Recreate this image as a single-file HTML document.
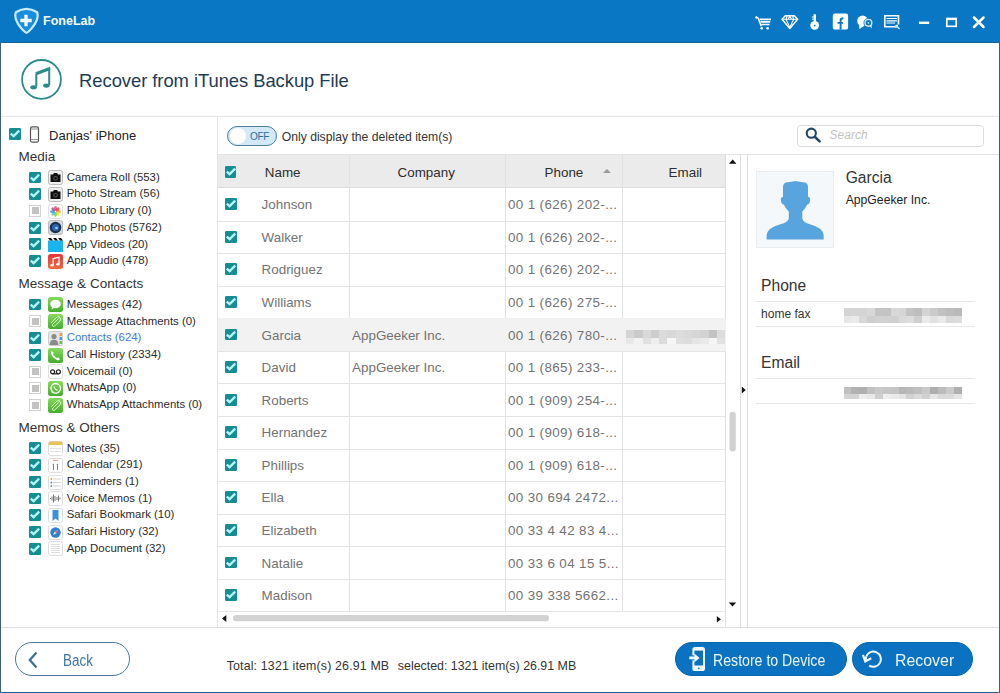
<!DOCTYPE html>
<html><head><meta charset="utf-8">
<style>
*{margin:0;padding:0;box-sizing:border-box}
html,body{width:1000px;height:693px;overflow:hidden;background:#fff}
body{font-family:"Liberation Sans",sans-serif;position:relative;color:#333}
.a{position:absolute}
.t{position:absolute;white-space:nowrap;line-height:1}
.hl{position:absolute;height:1px;background:#e3e3e3}
.vl{position:absolute;width:1px;background:#e3e3e3}
.cb{position:absolute;width:11.5px;height:11.8px;border-radius:1.3px;background:#178d93}
.cb svg{position:absolute;left:0;top:0}
.cbo{position:absolute;width:12px;height:12px;border:1px solid #d2d2d2;background:#fff}
.cbo i{position:absolute;left:1.5px;top:1.5px;width:7px;height:7px;background:#c2c2c2}
.ic{position:absolute;width:14px;height:14px;overflow:hidden}
.rt{position:absolute;font-size:13.4px;color:#6e6e6e;white-space:nowrap;line-height:1}
</style></head><body>
<div class="a" style="left:0;top:0;width:1000px;height:43px;background:#0977c4;border-bottom:1px solid #14639a"></div>
<svg class="a" style="left:12px;top:6px" width="30" height="30" viewBox="12 6 30 30">
<path d="M15.8 12.3 Q26.5 5.5 37.2 12.3 Q39.5 19.5 31.5 28.5 Q27.5 32.8 26.5 32.8 Q25.5 32.8 21.5 28.5 Q13.5 19.5 15.8 12.3 Z" fill="#1a8ddb" stroke="#c6ecff" stroke-width="2.2" stroke-linejoin="round"/>
<path d="M26 14.8 V26.2 M20.3 20.5 H31.7" stroke="#f4fbff" stroke-width="3.3"/>
</svg>
<div class="t" style="left:43.10px;top:14.92px;font-size:12.5px;color:#f4fbff;font-weight:bold">FoneLab</div>
<svg class="a" style="left:750px;top:8px" width="245" height="28" viewBox="750 8 245 28" fill="#fff" stroke="#fff">
<path d="M756 17.3 L758 18 L761.3 26.3" fill="none" stroke-width="1.5"/>
<circle cx="756.3" cy="17.4" r="1.1" stroke="none"/>
<path d="M759.5 19.3 H771 M760.5 21.9 H770.3 M761.3 24.5 H769.5" stroke-width="1.7"/>
<circle cx="761.7" cy="28.2" r="1.3" stroke="none"/><circle cx="767.6" cy="28.2" r="1.3" stroke="none"/>
<path d="M785.3 15.8 L794.3 15.8 L797.6 19.2 L789.8 28.5 L782 19.2 Z" fill="none" stroke-width="1.5" stroke-linejoin="round"/>
<path d="M782.3 19.3 H797.3 M787 16 L786 19.3 L789.8 27.5 L793.6 19.3 L792.6 16 M789.8 16 L788 19.3 M789.8 16 L791.6 19.3" fill="none" stroke-width="1.1"/>
<circle cx="814.7" cy="25.3" r="4.4" stroke="none"/>
<circle cx="814.7" cy="25.6" r="0.9" fill="#0977c4" stroke="none"/>
<rect x="813.6" y="14.3" width="2.4" height="8" stroke="none"/>
<path d="M811.8 17 H813.8 M812.3 19.2 H813.8" stroke-width="1.2"/>
<rect x="832.8" y="13.6" width="15.3" height="16" rx="2.2" stroke="none"/>
<path d="M840.6 29.8 V20.5 Q840.6 18.3 843.4 18.3 M837.6 22.9 H843" stroke="#0977c4" stroke-width="1.9" fill="none"/>
<circle cx="862.6" cy="21" r="5.4" stroke="none"/>
<path d="M859 25 L859.5 29.2 L863.5 26Z" stroke="none"/>
<circle cx="868.4" cy="23" r="4.9" fill="#0977c4" stroke="none"/>
<circle cx="868.4" cy="22.8" r="3.4" fill="none" stroke="#cfeaff" stroke-width="1.4"/>
<path d="M869.5 26 L872 28.5 L871.5 25" fill="#cfeaff" stroke="none"/>
<circle cx="868.4" cy="22.8" r="0.9" fill="#cfeaff" stroke="none"/>
<path d="M897.5 26.8 H884.8 V15.8 H898.5 V24.5" fill="none" stroke-width="1.6"/>
<path d="M886.5 18.5 H897 M886.5 20.8 H897 M886.5 23 H895" stroke-width="1.2"/>
<path d="M895.8 25.3 L899.6 29 M895.8 25.3 H898 M895.8 25.3 V27.5" stroke="#cfeaff" stroke-width="1.3" fill="none"/>
<path d="M919 22.8 H929.2" stroke-width="2.4"/>
<rect x="946.8" y="18.6" width="9.4" height="7.7" fill="none" stroke-width="1.7"/>
<path d="M946 19 H957" stroke-width="2.2"/>
<path d="M974 17.5 L983.5 27 M983.5 17.5 L974 27" stroke-width="2.5" stroke-linecap="round"/>
</svg>
<div class="a" style="left:0;top:43px;width:1px;height:650px;background:#3a6270"></div>
<div class="a" style="left:999px;top:43px;width:1px;height:650px;background:#3a6270"></div>
<div class="a" style="left:0;top:692px;width:1000px;height:1px;background:#2a5e86"></div>
<svg class="a" style="left:18px;top:56px" width="48" height="48" viewBox="18 56 48 48">
<circle cx="41.5" cy="79.4" r="19.4" fill="none" stroke="#2a8a8c" stroke-width="1.8"/>
<path d="M36.3 86.5 V73.5 M49.2 68.5 V85" fill="none" stroke="#2a8a8c" stroke-width="2"/><path d="M35.3 72.3 L50.2 66.8 L50.2 70 L37.3 75Z" fill="#2a8a8c"/>
<ellipse cx="33.6" cy="87.3" rx="3.3" ry="2.1" fill="#2a8a8c"/>
<ellipse cx="46.4" cy="85.6" rx="3.3" ry="2.1" fill="#2a8a8c"/>
</svg>
<div class="t" style="left:79.10px;top:71.92px;font-size:18.4px;color:#1e3b55;letter-spacing:-0.05px">Recover from iTunes Backup File</div>
<div class="hl" style="left:1px;top:116px;width:998px;background:#e6e6e6"></div>
<div class="vl" style="left:217px;top:117px;height:510px;background:#e6e6e6"></div>
<div class="cb" style="left:9px;top:128px"><svg width="12" height="12" viewBox="0 0 12 12"><path d="M1.8 5.6 L4.6 8.1 L10.2 2.7" fill="none" stroke="#b0fbff" stroke-width="2.3"/></svg></div>
<svg class="a" style="left:29px;top:126px" width="11" height="17" viewBox="0 0 11 17"><rect x="1.5" y="0.8" width="8" height="15.4" rx="1.8" fill="none" stroke="#555" stroke-width="1.2"/><path d="M1.5 3 H9.5 M1.5 13.5 H9.5" stroke="#777" stroke-width="0.8"/></svg>
<div class="t" style="left:49.10px;top:128.60px;font-size:13px;color:#222;">Danjas' iPhone</div>
<div class="t" style="left:18.60px;top:149.77px;font-size:13.5px;color:#333;">Media</div>
<div class="cb" style="left:29px;top:171.5px"><svg width="12" height="12" viewBox="0 0 12 12"><path d="M1.8 5.6 L4.6 8.1 L10.2 2.7" fill="none" stroke="#b0fbff" stroke-width="2.3"/></svg></div>
<svg class="a" style="left:48px;top:170.2px" width="15" height="15" viewBox="0 0 15 15"><rect x="0.5" y="0.5" width="14" height="14" rx="2" fill="#eee" stroke="#bbb"/><path d="M2.5 4.5 H5 L6 3 H9 L10 4.5 H12.5 V12 H2.5 Z" fill="#111"/><circle cx="7.5" cy="8.2" r="2.3" fill="#555"/><circle cx="7.5" cy="8.2" r="1.2" fill="#111"/></svg>
<div class="t" style="left:66.70px;top:171.65px;font-size:11.4px;color:#2b2b2b;">Camera Roll (553)</div>
<div class="cb" style="left:29px;top:188.24px"><svg width="12" height="12" viewBox="0 0 12 12"><path d="M1.8 5.6 L4.6 8.1 L10.2 2.7" fill="none" stroke="#b0fbff" stroke-width="2.3"/></svg></div>
<svg class="a" style="left:48px;top:186.94px" width="15" height="15" viewBox="0 0 15 15"><rect x="0.5" y="0.5" width="14" height="14" rx="2" fill="#eee" stroke="#bbb"/><path d="M2.5 4.5 H5 L6 3 H9 L10 4.5 H12.5 V12 H2.5 Z" fill="#111"/><circle cx="7.5" cy="8.2" r="2.3" fill="#555"/><circle cx="7.5" cy="8.2" r="1.2" fill="#111"/></svg>
<div class="t" style="left:66.70px;top:188.39px;font-size:11.4px;color:#2b2b2b;">Photo Stream (56)</div>
<div class="cbo" style="left:29px;top:204.98px"><i></i></div>
<svg class="a" style="left:48px;top:203.68px" width="15" height="15" viewBox="0 0 15 15"><rect x="0.5" y="0.5" width="14" height="14" rx="2" fill="#fff" stroke="#ddd"/><ellipse cx="10.50" cy="7.50" rx="2.4" ry="1.5" transform="rotate(0 10.50 7.50)" fill="#f5a623" opacity="0.85"/><ellipse cx="9.62" cy="9.62" rx="2.4" ry="1.5" transform="rotate(45 9.62 9.62)" fill="#f8e71c" opacity="0.85"/><ellipse cx="7.50" cy="10.50" rx="2.4" ry="1.5" transform="rotate(90 7.50 10.50)" fill="#7ed321" opacity="0.85"/><ellipse cx="5.38" cy="9.62" rx="2.4" ry="1.5" transform="rotate(135 5.38 9.62)" fill="#50c8e8" opacity="0.85"/><ellipse cx="4.50" cy="7.50" rx="2.4" ry="1.5" transform="rotate(180 4.50 7.50)" fill="#4a90e2" opacity="0.85"/><ellipse cx="5.38" cy="5.38" rx="2.4" ry="1.5" transform="rotate(225 5.38 5.38)" fill="#9b59b6" opacity="0.85"/><ellipse cx="7.50" cy="4.50" rx="2.4" ry="1.5" transform="rotate(270 7.50 4.50)" fill="#e94b8a" opacity="0.85"/><ellipse cx="9.62" cy="5.38" rx="2.4" ry="1.5" transform="rotate(315 9.62 5.38)" fill="#e8413a" opacity="0.85"/></svg>
<div class="t" style="left:66.70px;top:205.13px;font-size:11.4px;color:#2b2b2b;">Photo Library (0)</div>
<div class="cb" style="left:29px;top:221.72px"><svg width="12" height="12" viewBox="0 0 12 12"><path d="M1.8 5.6 L4.6 8.1 L10.2 2.7" fill="none" stroke="#b0fbff" stroke-width="2.3"/></svg></div>
<svg class="a" style="left:48px;top:220.42px" width="15" height="15" viewBox="0 0 15 15"><rect x="0.5" y="0.5" width="14" height="14" rx="2" fill="#d8d8d8" stroke="#bbb"/><circle cx="7.5" cy="7.5" r="5.8" fill="#1d3152"/><circle cx="7.5" cy="7.5" r="3.5" fill="#2d66b0"/><circle cx="8.5" cy="8" r="1.3" fill="#9fd0ff"/></svg>
<div class="t" style="left:66.70px;top:221.87px;font-size:11.4px;color:#2b2b2b;">App Photos (5762)</div>
<div class="cb" style="left:29px;top:238.46px"><svg width="12" height="12" viewBox="0 0 12 12"><path d="M1.8 5.6 L4.6 8.1 L10.2 2.7" fill="none" stroke="#b0fbff" stroke-width="2.3"/></svg></div>
<svg class="a" style="left:48px;top:237.16px" width="15" height="15" viewBox="0 0 15 15"><rect x="0" y="3" width="15" height="12" fill="#1ab4ef"/><path d="M0 0.5 H15 V3.5 H0Z" fill="#fff"/><path d="M0 1 L3 1 L5 3.5 L2 3.5 Z M5 1 L8 1 L10 3.5 L7 3.5Z M10 1 L13 1 L15 3.5 L12 3.5Z" fill="#111"/></svg>
<div class="t" style="left:66.70px;top:238.61px;font-size:11.4px;color:#2b2b2b;">App Videos (20)</div>
<div class="cb" style="left:29px;top:255.2px"><svg width="12" height="12" viewBox="0 0 12 12"><path d="M1.8 5.6 L4.6 8.1 L10.2 2.7" fill="none" stroke="#b0fbff" stroke-width="2.3"/></svg></div>
<svg class="a" style="left:48px;top:253.9px" width="15" height="15" viewBox="0 0 15 15"><defs><linearGradient id="ga" x1="0" y1="0" x2="0" y2="1"><stop offset="0" stop-color="#e8343a"/><stop offset="1" stop-color="#f06a3c"/></linearGradient></defs><rect x="0" y="0" width="15" height="15" rx="2.5" fill="url(#ga)"/><path d="M5.2 11 V4.5 L11 3.2 V10" fill="none" stroke="#fff" stroke-width="1.3"/><ellipse cx="4" cy="11.3" rx="1.7" ry="1.2" fill="#fff"/><ellipse cx="9.8" cy="10.2" rx="1.7" ry="1.2" fill="#fff"/></svg>
<div class="t" style="left:66.70px;top:255.35px;font-size:11.4px;color:#2b2b2b;">App Audio (478)</div>
<div class="t" style="left:18.60px;top:277.07px;font-size:13.5px;color:#333;">Message &amp; Contacts</div>
<div class="cb" style="left:29px;top:298.7px"><svg width="12" height="12" viewBox="0 0 12 12"><path d="M1.8 5.6 L4.6 8.1 L10.2 2.7" fill="none" stroke="#b0fbff" stroke-width="2.3"/></svg></div>
<svg class="a" style="left:48px;top:297.4px" width="15" height="15" viewBox="0 0 15 15"><defs><linearGradient id="gm" x1="0" y1="0" x2="0" y2="1"><stop offset="0" stop-color="#86dc5c"/><stop offset="1" stop-color="#43ad2b"/></linearGradient></defs><rect x="0" y="0" width="15" height="15" rx="2.5" fill="url(#gm)"/><ellipse cx="7.5" cy="7" rx="5.3" ry="4.2" fill="#fff"/><path d="M4 10 L3.5 12.5 L6.5 10.5Z" fill="#fff"/></svg>
<div class="t" style="left:66.70px;top:298.85px;font-size:11.4px;color:#2b2b2b;">Messages (42)</div>
<div class="cbo" style="left:29px;top:315.42px"><i></i></div>
<svg class="a" style="left:48px;top:314.12px" width="15" height="15" viewBox="0 0 15 15"><rect x="0" y="0" width="15" height="15" rx="2.5" fill="url(#gm)"/><path d="M10.5 4.5 L5 10 Q3.8 11.2 4.8 12.2 Q5.8 13 7 11.8 L12 6.8 Q13.6 5 12 3.3 Q10.3 1.8 8.5 3.5 L3.2 8.8" fill="none" stroke="#eaffd8" stroke-width="0.9"/></svg>
<div class="t" style="left:66.70px;top:315.57px;font-size:11.4px;color:#2b2b2b;">Message Attachments (0)</div>
<div class="cb" style="left:29px;top:332.14px"><svg width="12" height="12" viewBox="0 0 12 12"><path d="M1.8 5.6 L4.6 8.1 L10.2 2.7" fill="none" stroke="#b0fbff" stroke-width="2.3"/></svg></div>
<svg class="a" style="left:48px;top:330.84px" width="15" height="15" viewBox="0 0 15 15"><rect x="0.5" y="0.5" width="14" height="14" rx="2" fill="#e6e6e6" stroke="#ccc"/><circle cx="6" cy="5.5" r="2.6" fill="#8a8a8a"/><path d="M1.5 14 Q2 8.5 6 8.8 Q10 8.5 10.5 14Z" fill="#8a8a8a"/><rect x="11.5" y="2" width="2.5" height="3" fill="#e8a33a"/><rect x="11.5" y="6" width="2.5" height="3" fill="#4a9ad8"/><rect x="11.5" y="10" width="2.5" height="3" fill="#6ac24a"/></svg>
<div class="t" style="left:66.70px;top:332.29px;font-size:11.4px;color:#3a7bd5;">Contacts (624)</div>
<div class="cb" style="left:29px;top:348.86px"><svg width="12" height="12" viewBox="0 0 12 12"><path d="M1.8 5.6 L4.6 8.1 L10.2 2.7" fill="none" stroke="#b0fbff" stroke-width="2.3"/></svg></div>
<svg class="a" style="left:48px;top:347.56px" width="15" height="15" viewBox="0 0 15 15"><rect x="0" y="0" width="15" height="15" rx="2.5" fill="url(#gm)"/><path d="M3.5 3 Q2.5 4 3.2 6 Q5 10.5 9 12 Q11 12.7 12 11.5 L10.3 9.3 L8.8 10 Q6.2 8.7 5 6.2 L5.8 4.7Z" fill="#fff"/></svg>
<div class="t" style="left:66.70px;top:349.01px;font-size:11.4px;color:#2b2b2b;">Call History (2334)</div>
<div class="cbo" style="left:29px;top:365.58px"><i></i></div>
<svg class="a" style="left:48px;top:364.28px" width="15" height="15" viewBox="0 0 15 15"><rect x="0.5" y="0.5" width="14" height="14" rx="2" fill="#fff" stroke="#ddd"/><circle cx="4.6" cy="7.8" r="2" fill="none" stroke="#222" stroke-width="1.2"/><circle cx="10.4" cy="7.8" r="2" fill="none" stroke="#222" stroke-width="1.2"/><path d="M4.6 9.8 H10.4" stroke="#222" stroke-width="1.2"/></svg>
<div class="t" style="left:66.70px;top:365.73px;font-size:11.4px;color:#2b2b2b;">Voicemail (0)</div>
<div class="cbo" style="left:29px;top:382.3px"><i></i></div>
<svg class="a" style="left:48px;top:381.0px" width="15" height="15" viewBox="0 0 15 15"><rect x="0" y="0" width="15" height="15" rx="2.5" fill="url(#gm)"/><circle cx="7.7" cy="7.3" r="4.8" fill="none" stroke="#fff" stroke-width="1.3"/><path d="M3.5 12.5 L4.2 9.5 L6 11.3Z" fill="#fff"/><path d="M6 5.5 Q6.5 8.5 9.5 9.2" stroke="#fff" stroke-width="1.3" fill="none"/></svg>
<div class="t" style="left:66.70px;top:382.45px;font-size:11.4px;color:#2b2b2b;">WhatsApp (0)</div>
<div class="cbo" style="left:29px;top:399.02px"><i></i></div>
<svg class="a" style="left:48px;top:397.72px" width="15" height="15" viewBox="0 0 15 15"><rect x="0" y="0" width="15" height="15" rx="2.5" fill="url(#gm)"/><path d="M10.5 4.5 L5 10 Q3.8 11.2 4.8 12.2 Q5.8 13 7 11.8 L12 6.8 Q13.6 5 12 3.3 Q10.3 1.8 8.5 3.5 L3.2 8.8" fill="none" stroke="#eaffd8" stroke-width="0.9"/></svg>
<div class="t" style="left:66.70px;top:399.17px;font-size:11.4px;color:#2b2b2b;">WhatsApp Attachments (0)</div>
<div class="t" style="left:18.60px;top:421.47px;font-size:13.5px;color:#333;">Memos &amp; Others</div>
<div class="cb" style="left:29px;top:442.4px"><svg width="12" height="12" viewBox="0 0 12 12"><path d="M1.8 5.6 L4.6 8.1 L10.2 2.7" fill="none" stroke="#b0fbff" stroke-width="2.3"/></svg></div>
<svg class="a" style="left:48px;top:441.1px" width="15" height="15" viewBox="0 0 15 15"><rect x="0.5" y="0.5" width="14" height="14" rx="2" fill="#fff" stroke="#ddd"/><path d="M0.5 2.5 Q0.5 0.5 2.5 0.5 H12.5 Q14.5 0.5 14.5 2.5 V4 H0.5Z" fill="#e9c35a"/><path d="M2 7.5 H13 M2 10.5 H13" stroke="#e2e2e2"/></svg>
<div class="t" style="left:66.70px;top:442.55px;font-size:11.4px;color:#2b2b2b;">Notes (35)</div>
<div class="cb" style="left:29px;top:459.12px"><svg width="12" height="12" viewBox="0 0 12 12"><path d="M1.8 5.6 L4.6 8.1 L10.2 2.7" fill="none" stroke="#b0fbff" stroke-width="2.3"/></svg></div>
<svg class="a" style="left:48px;top:457.82px" width="15" height="15" viewBox="0 0 15 15"><rect x="0.5" y="0.5" width="14" height="14" rx="2" fill="#fff" stroke="#ddd"/><path d="M5 2.5 H10" stroke="#e88" stroke-width="0.8"/><path d="M5.5 6 V12 M9.5 6 V12 M4.7 6.5 L5.5 6 M8.7 6.5 L9.5 6" stroke="#777" stroke-width="0.9"/></svg>
<div class="t" style="left:66.70px;top:459.27px;font-size:11.4px;color:#2b2b2b;">Calendar (291)</div>
<div class="cb" style="left:29px;top:475.84px"><svg width="12" height="12" viewBox="0 0 12 12"><path d="M1.8 5.6 L4.6 8.1 L10.2 2.7" fill="none" stroke="#b0fbff" stroke-width="2.3"/></svg></div>
<svg class="a" style="left:48px;top:474.54px" width="15" height="15" viewBox="0 0 15 15"><rect x="0.5" y="0.5" width="14" height="14" rx="2" fill="#fff" stroke="#ddd"/><circle cx="3.3" cy="4" r="0.9" fill="#f39c12"/><circle cx="3.3" cy="7.5" r="0.9" fill="#3498db"/><circle cx="3.3" cy="11" r="0.9" fill="#27ae60"/><path d="M5 4 H13 M5 7.5 H13 M5 11 H13" stroke="#ccc" stroke-width="0.8"/></svg>
<div class="t" style="left:66.70px;top:475.99px;font-size:11.4px;color:#2b2b2b;">Reminders (1)</div>
<div class="cb" style="left:29px;top:492.56px"><svg width="12" height="12" viewBox="0 0 12 12"><path d="M1.8 5.6 L4.6 8.1 L10.2 2.7" fill="none" stroke="#b0fbff" stroke-width="2.3"/></svg></div>
<svg class="a" style="left:48px;top:491.26px" width="15" height="15" viewBox="0 0 15 15"><rect x="0.5" y="0.5" width="14" height="14" rx="2" fill="#fff" stroke="#ddd"/><path d="M2.5 7 V8 M4 5.5 V9.5 M5.5 3.5 V11.5 M7 5 V10 M9 6 V9 M10.5 4.5 V10.5 M12 6.5 V8.5" stroke="#666" stroke-width="0.9"/></svg>
<div class="t" style="left:66.70px;top:492.71px;font-size:11.4px;color:#2b2b2b;">Voice Memos (1)</div>
<div class="cb" style="left:29px;top:509.28px"><svg width="12" height="12" viewBox="0 0 12 12"><path d="M1.8 5.6 L4.6 8.1 L10.2 2.7" fill="none" stroke="#b0fbff" stroke-width="2.3"/></svg></div>
<svg class="a" style="left:48px;top:507.98px" width="15" height="15" viewBox="0 0 15 15"><rect x="0.5" y="0.5" width="14" height="14" rx="2" fill="#fff" stroke="#ddd"/><path d="M4.5 2 H10.5 V13 L7.5 10.5 L4.5 13Z" fill="#3d8fe0"/></svg>
<div class="t" style="left:66.70px;top:509.43px;font-size:11.4px;color:#2b2b2b;">Safari Bookmark (10)</div>
<div class="cb" style="left:29px;top:526.0px"><svg width="12" height="12" viewBox="0 0 12 12"><path d="M1.8 5.6 L4.6 8.1 L10.2 2.7" fill="none" stroke="#b0fbff" stroke-width="2.3"/></svg></div>
<svg class="a" style="left:48px;top:524.7px" width="15" height="15" viewBox="0 0 15 15"><rect x="0.5" y="0.5" width="14" height="14" rx="2" fill="#fff" stroke="#ddd"/><circle cx="7.5" cy="7.5" r="5.2" fill="#2f7fd8"/><path d="M10 5 L8.3 8.3 L5 10 L6.7 6.7Z" fill="#fff"/><path d="M10 5 L8.3 8.3 L6.7 6.7Z" fill="#e53"/></svg>
<div class="t" style="left:66.70px;top:526.15px;font-size:11.4px;color:#2b2b2b;">Safari History (32)</div>
<div class="cb" style="left:29px;top:542.72px"><svg width="12" height="12" viewBox="0 0 12 12"><path d="M1.8 5.6 L4.6 8.1 L10.2 2.7" fill="none" stroke="#b0fbff" stroke-width="2.3"/></svg></div>
<svg class="a" style="left:48px;top:541.42px" width="15" height="15" viewBox="0 0 15 15"><rect x="0.5" y="0.5" width="14" height="14" rx="2" fill="#fff" stroke="#ddd"/><path d="M3 3.5 H12 M3 5.5 H12 M3 7.5 H12 M3 9.5 H12 M3 11.5 H12" stroke="#d5d5d5" stroke-width="0.8"/></svg>
<div class="t" style="left:66.70px;top:542.87px;font-size:11.4px;color:#2b2b2b;">App Document (32)</div>
<div class="a" style="left:227px;top:125.5px;width:50px;height:20px;border-radius:10px;border:1.5px solid #4f7f98;background:#d3e9f8"></div>
<div class="a" style="left:229.5px;top:127.5px;width:16px;height:16px;border-radius:50%;background:#fff"></div>
<div class="t" style="left:250.10px;top:132.13px;font-size:10px;color:#2b6ea6;letter-spacing:-0.35px">OFF</div>
<div class="t" style="left:281.70px;top:130.87px;font-size:12.2px;color:#333;">Only display the deleted item(s)</div>
<div class="a" style="left:797px;top:124.5px;width:187px;height:22px;border-radius:4px;border:1px solid #dcdcdc;background:#fff"></div>
<svg class="a" style="left:804px;top:126px" width="20" height="20" viewBox="804 126 20 20"><circle cx="811.3" cy="133.2" r="4.6" fill="none" stroke="#23476a" stroke-width="2.1"/><path d="M814.8 136.8 L819.6 141.4" stroke="#23476a" stroke-width="2.6" stroke-linecap="round"/></svg>
<div class="t" style="left:829.60px;top:129.24px;font-size:12px;color:#c2c2c2;font-style:italic">Search</div>
<div class="hl" style="left:218px;top:154px;width:781px;background:#e4e4e4"></div>
<div class="a" style="left:218px;top:155px;width:508px;height:33px;background:#ebebeb;border-bottom:1px solid #dcdcdc"></div>
<div class="vl" style="left:349px;top:155px;height:456px;background:#e2e2e2"></div>
<div class="vl" style="left:505px;top:155px;height:456px;background:#e2e2e2"></div>
<div class="vl" style="left:622px;top:155px;height:456px;background:#e2e2e2"></div>
<div class="cb" style="left:224.5px;top:166px"><svg width="12" height="12" viewBox="0 0 12 12"><path d="M1.8 5.6 L4.6 8.1 L10.2 2.7" fill="none" stroke="#b0fbff" stroke-width="2.3"/></svg></div>
<div class="t" style="left:264.80px;top:166.26px;font-size:13.4px;color:#2e2e2e;">Name</div>
<div class="t" style="left:397.60px;top:166.26px;font-size:13.4px;color:#2e2e2e;">Company</div>
<div class="t" style="left:544.60px;top:166.26px;font-size:13.4px;color:#2e2e2e;">Phone</div>
<svg class="a" style="left:602px;top:168px" width="10" height="6" viewBox="0 0 10 6"><path d="M1 5 L5 1 L9 5Z" fill="#9a9a9a"/></svg>
<div class="t" style="left:668.60px;top:166.26px;font-size:13.4px;color:#2e2e2e;">Email</div>
<div class="vl" style="left:725px;top:155px;height:471px;background:#e0e0e0"></div>
<div class="hl" style="left:218px;top:221px;width:508px;background:#e4e4e4"></div>
<div class="cb" style="left:225px;top:198.3px"><svg width="12" height="12" viewBox="0 0 12 12"><path d="M1.8 5.6 L4.6 8.1 L10.2 2.7" fill="none" stroke="#b0fbff" stroke-width="2.3"/></svg></div>
<div class="t" style="left:261.60px;top:198.26px;font-size:13.4px;color:#737373;">Johnson</div>
<div class="t" style="left:507.90px;top:198.26px;font-size:13.4px;color:#737373;letter-spacing:0.38px">00 1 (626) 202-...</div>
<div class="hl" style="left:218px;top:253px;width:508px;background:#e4e4e4"></div>
<div class="cb" style="left:225px;top:230.87px"><svg width="12" height="12" viewBox="0 0 12 12"><path d="M1.8 5.6 L4.6 8.1 L10.2 2.7" fill="none" stroke="#b0fbff" stroke-width="2.3"/></svg></div>
<div class="t" style="left:261.60px;top:230.83px;font-size:13.4px;color:#737373;">Walker</div>
<div class="t" style="left:507.90px;top:230.83px;font-size:13.4px;color:#737373;letter-spacing:0.38px">00 1 (626) 202-...</div>
<div class="hl" style="left:218px;top:286px;width:508px;background:#e4e4e4"></div>
<div class="cb" style="left:225px;top:263.44px"><svg width="12" height="12" viewBox="0 0 12 12"><path d="M1.8 5.6 L4.6 8.1 L10.2 2.7" fill="none" stroke="#b0fbff" stroke-width="2.3"/></svg></div>
<div class="t" style="left:261.60px;top:263.40px;font-size:13.4px;color:#737373;">Rodriguez</div>
<div class="t" style="left:507.90px;top:263.40px;font-size:13.4px;color:#737373;letter-spacing:0.38px">00 1 (626) 202-...</div>
<div class="hl" style="left:218px;top:318px;width:508px;background:#e4e4e4"></div>
<div class="cb" style="left:225px;top:296.01px"><svg width="12" height="12" viewBox="0 0 12 12"><path d="M1.8 5.6 L4.6 8.1 L10.2 2.7" fill="none" stroke="#b0fbff" stroke-width="2.3"/></svg></div>
<div class="t" style="left:261.60px;top:295.97px;font-size:13.4px;color:#737373;">Williams</div>
<div class="t" style="left:507.90px;top:295.97px;font-size:13.4px;color:#737373;letter-spacing:0.38px">00 1 (626) 275-...</div>
<div class="a" style="left:218px;top:318.28px;width:508px;height:32.57px;background:#f2f2f2"></div>
<div class="a" style="left:626px;top:329.78px;width:99px;height:14px;overflow:hidden;filter:blur(0.6px)"><i style="position:absolute;left:0.00px;top:0px;width:8.75px;height:8px;background:rgb(213,213,213)"></i><i style="position:absolute;left:8.25px;top:0px;width:8.75px;height:8px;background:rgb(202,202,202)"></i><i style="position:absolute;left:16.50px;top:0px;width:8.75px;height:8px;background:rgb(217,217,217)"></i><i style="position:absolute;left:24.75px;top:0px;width:8.75px;height:8px;background:rgb(205,205,205)"></i><i style="position:absolute;left:33.00px;top:0px;width:8.75px;height:8px;background:rgb(219,219,219)"></i><i style="position:absolute;left:41.25px;top:0px;width:8.75px;height:8px;background:rgb(216,216,216)"></i><i style="position:absolute;left:49.50px;top:0px;width:8.75px;height:8px;background:rgb(220,220,220)"></i><i style="position:absolute;left:57.75px;top:0px;width:8.75px;height:8px;background:rgb(217,217,217)"></i><i style="position:absolute;left:66.00px;top:0px;width:8.75px;height:8px;background:rgb(214,214,214)"></i><i style="position:absolute;left:74.25px;top:0px;width:8.75px;height:8px;background:rgb(210,210,210)"></i><i style="position:absolute;left:82.50px;top:0px;width:8.75px;height:8px;background:rgb(194,194,194)"></i><i style="position:absolute;left:90.75px;top:0px;width:8.75px;height:8px;background:rgb(220,220,220)"></i><i style="position:absolute;left:0.00px;top:8px;width:8.75px;height:6px;background:rgb(232,232,232)"></i><i style="position:absolute;left:8.25px;top:8px;width:8.75px;height:6px;background:rgb(242,242,242)"></i><i style="position:absolute;left:16.50px;top:8px;width:8.75px;height:6px;background:rgb(225,225,225)"></i><i style="position:absolute;left:24.75px;top:8px;width:8.75px;height:6px;background:rgb(238,238,238)"></i><i style="position:absolute;left:33.00px;top:8px;width:8.75px;height:6px;background:rgb(219,219,219)"></i><i style="position:absolute;left:41.25px;top:8px;width:8.75px;height:6px;background:rgb(246,246,246)"></i><i style="position:absolute;left:49.50px;top:8px;width:8.75px;height:6px;background:rgb(223,223,223)"></i><i style="position:absolute;left:57.75px;top:8px;width:8.75px;height:6px;background:rgb(221,221,221)"></i><i style="position:absolute;left:66.00px;top:8px;width:8.75px;height:6px;background:rgb(229,229,229)"></i><i style="position:absolute;left:74.25px;top:8px;width:8.75px;height:6px;background:rgb(233,233,233)"></i><i style="position:absolute;left:82.50px;top:8px;width:8.75px;height:6px;background:rgb(245,245,245)"></i><i style="position:absolute;left:90.75px;top:8px;width:8.75px;height:6px;background:rgb(225,225,225)"></i></div>
<div class="hl" style="left:218px;top:351px;width:508px;background:#e4e4e4"></div>
<div class="cb" style="left:225px;top:328.58px"><svg width="12" height="12" viewBox="0 0 12 12"><path d="M1.8 5.6 L4.6 8.1 L10.2 2.7" fill="none" stroke="#b0fbff" stroke-width="2.3"/></svg></div>
<div class="t" style="left:261.60px;top:328.54px;font-size:13.4px;color:#737373;">Garcia</div>
<div class="t" style="left:352.10px;top:328.54px;font-size:13.4px;color:#737373;">AppGeeker Inc.</div>
<div class="t" style="left:507.90px;top:328.54px;font-size:13.4px;color:#737373;letter-spacing:0.38px">00 1 (626) 780-...</div>
<div class="hl" style="left:218px;top:383px;width:508px;background:#e4e4e4"></div>
<div class="cb" style="left:225px;top:361.15px"><svg width="12" height="12" viewBox="0 0 12 12"><path d="M1.8 5.6 L4.6 8.1 L10.2 2.7" fill="none" stroke="#b0fbff" stroke-width="2.3"/></svg></div>
<div class="t" style="left:261.60px;top:361.11px;font-size:13.4px;color:#737373;">David</div>
<div class="t" style="left:352.10px;top:361.11px;font-size:13.4px;color:#737373;">AppGeeker Inc.</div>
<div class="t" style="left:507.90px;top:361.11px;font-size:13.4px;color:#737373;letter-spacing:0.38px">00 1 (865) 233-...</div>
<div class="hl" style="left:218px;top:416px;width:508px;background:#e4e4e4"></div>
<div class="cb" style="left:225px;top:393.72px"><svg width="12" height="12" viewBox="0 0 12 12"><path d="M1.8 5.6 L4.6 8.1 L10.2 2.7" fill="none" stroke="#b0fbff" stroke-width="2.3"/></svg></div>
<div class="t" style="left:261.60px;top:393.68px;font-size:13.4px;color:#737373;">Roberts</div>
<div class="t" style="left:507.90px;top:393.68px;font-size:13.4px;color:#737373;letter-spacing:0.38px">00 1 (909) 254-...</div>
<div class="hl" style="left:218px;top:449px;width:508px;background:#e4e4e4"></div>
<div class="cb" style="left:225px;top:426.29px"><svg width="12" height="12" viewBox="0 0 12 12"><path d="M1.8 5.6 L4.6 8.1 L10.2 2.7" fill="none" stroke="#b0fbff" stroke-width="2.3"/></svg></div>
<div class="t" style="left:261.60px;top:426.25px;font-size:13.4px;color:#737373;">Hernandez</div>
<div class="t" style="left:507.90px;top:426.25px;font-size:13.4px;color:#737373;letter-spacing:0.38px">00 1 (909) 618-...</div>
<div class="hl" style="left:218px;top:481px;width:508px;background:#e4e4e4"></div>
<div class="cb" style="left:225px;top:458.86px"><svg width="12" height="12" viewBox="0 0 12 12"><path d="M1.8 5.6 L4.6 8.1 L10.2 2.7" fill="none" stroke="#b0fbff" stroke-width="2.3"/></svg></div>
<div class="t" style="left:261.60px;top:458.82px;font-size:13.4px;color:#737373;">Phillips</div>
<div class="t" style="left:507.90px;top:458.82px;font-size:13.4px;color:#737373;letter-spacing:0.38px">00 1 (909) 618-...</div>
<div class="hl" style="left:218px;top:514px;width:508px;background:#e4e4e4"></div>
<div class="cb" style="left:225px;top:491.43px"><svg width="12" height="12" viewBox="0 0 12 12"><path d="M1.8 5.6 L4.6 8.1 L10.2 2.7" fill="none" stroke="#b0fbff" stroke-width="2.3"/></svg></div>
<div class="t" style="left:261.60px;top:491.39px;font-size:13.4px;color:#737373;">Ella</div>
<div class="t" style="left:507.90px;top:491.39px;font-size:13.4px;color:#737373;letter-spacing:0.38px">00 30 694 2472...</div>
<div class="hl" style="left:218px;top:546px;width:508px;background:#e4e4e4"></div>
<div class="cb" style="left:225px;top:524.0px"><svg width="12" height="12" viewBox="0 0 12 12"><path d="M1.8 5.6 L4.6 8.1 L10.2 2.7" fill="none" stroke="#b0fbff" stroke-width="2.3"/></svg></div>
<div class="t" style="left:261.60px;top:523.96px;font-size:13.4px;color:#737373;">Elizabeth</div>
<div class="t" style="left:507.90px;top:523.96px;font-size:13.4px;color:#737373;letter-spacing:0.38px">00 33 4 42 83 4...</div>
<div class="hl" style="left:218px;top:579px;width:508px;background:#e4e4e4"></div>
<div class="cb" style="left:225px;top:556.57px"><svg width="12" height="12" viewBox="0 0 12 12"><path d="M1.8 5.6 L4.6 8.1 L10.2 2.7" fill="none" stroke="#b0fbff" stroke-width="2.3"/></svg></div>
<div class="t" style="left:261.60px;top:556.53px;font-size:13.4px;color:#737373;">Natalie</div>
<div class="t" style="left:507.90px;top:556.53px;font-size:13.4px;color:#737373;letter-spacing:0.38px">00 33 6 04 15 5...</div>
<div class="hl" style="left:218px;top:611px;width:508px;background:#e4e4e4"></div>
<div class="cb" style="left:225px;top:589.14px"><svg width="12" height="12" viewBox="0 0 12 12"><path d="M1.8 5.6 L4.6 8.1 L10.2 2.7" fill="none" stroke="#b0fbff" stroke-width="2.3"/></svg></div>
<div class="t" style="left:261.60px;top:589.10px;font-size:13.4px;color:#737373;">Madison</div>
<div class="t" style="left:507.90px;top:589.10px;font-size:13.4px;color:#737373;letter-spacing:0.38px">00 39 338 5662...</div>
<svg class="a" style="left:726px;top:155px" width="14" height="456" viewBox="726 155 14 456"><path d="M729 163.8 L732.7 159.6 L736.4 163.8Z" fill="#111"/><path d="M728.8 602.5 L736.2 602.5 L732.5 606.5Z" fill="#111"/><rect x="729.5" y="411.8" width="6.3" height="39.6" rx="3" fill="#d2d2d2"/></svg>
<svg class="a" style="left:218px;top:611px" width="508" height="16" viewBox="218 611 508 16"><path d="M226.3 615 L222 618.5 L226.3 622Z" fill="#111"/><path d="M716.8 616.2 L721 619.3 L716.8 622.5Z" fill="#111"/><rect x="233" y="615" width="316" height="6.3" rx="3" fill="#d2d2d2"/></svg>
<div class="vl" style="left:740px;top:155px;height:472px;background:#dedede"></div>
<div class="vl" style="left:747px;top:155px;height:472px;background:#dedede"></div>
<svg class="a" style="left:741px;top:386px" width="6" height="8" viewBox="741 386 6 8"><path d="M741.8 386.5 L745.7 390 L741.8 393.6Z" fill="#111"/></svg>
<div class="a" style="left:756px;top:170.5px;width:78px;height:77.5px;background:#f5f8fb;border:1px solid #eaedf0"></div>
<svg class="a" style="left:756px;top:170px" width="78" height="78" viewBox="756 170 78 78"><path d="M783 187 Q783 182.5 788 182.3 L793 181.6 Q795.5 180.6 798 181.6 L803 182.3 Q808 182.5 808 187 L808 196.8 Q810.6 197.3 810.1 200.8 Q809.6 204.3 807.2 204.6 Q805.6 209 802.3 211.6 L802.3 218.5 Q803 222.5 810 224.2 Q822.5 227.5 823.7 235 L823.7 239.5 L766.6 239.5 L766.6 235 Q767.8 227.5 780.3 224.2 Q787.8 222.5 788.8 218.5 L788.8 211.6 Q785.5 209 783.8 204.6 Q781.4 204.3 780.9 200.8 Q780.4 197.3 783 196.8 Z" fill="#58a4df"/></svg>
<div class="t" style="left:845.70px;top:170.09px;font-size:15.6px;color:#333;">Garcia</div>
<div class="t" style="left:845.70px;top:193.77px;font-size:12.2px;color:#222;">AppGeeker Inc.</div>
<div class="t" style="left:761.10px;top:278.49px;font-size:15.6px;color:#333;">Phone</div>
<div class="hl" style="left:756px;top:301px;width:219px;background:#e8e8e8"></div>
<div class="t" style="left:761.10px;top:308.34px;font-size:12px;color:#333;">home fax</div>
<div class="a" style="left:843.5px;top:307.8px;width:118px;height:15.5px;overflow:hidden;filter:blur(0.6px)"><i style="position:absolute;left:0.00px;top:0px;width:8.37px;height:8px;background:rgb(212,212,212)"></i><i style="position:absolute;left:7.87px;top:0px;width:8.37px;height:8px;background:rgb(213,213,213)"></i><i style="position:absolute;left:15.73px;top:0px;width:8.37px;height:8px;background:rgb(212,212,212)"></i><i style="position:absolute;left:23.60px;top:0px;width:8.37px;height:8px;background:rgb(216,216,216)"></i><i style="position:absolute;left:31.47px;top:0px;width:8.37px;height:8px;background:rgb(196,196,196)"></i><i style="position:absolute;left:39.33px;top:0px;width:8.37px;height:8px;background:rgb(195,195,195)"></i><i style="position:absolute;left:47.20px;top:0px;width:8.37px;height:8px;background:rgb(216,216,216)"></i><i style="position:absolute;left:55.07px;top:0px;width:8.37px;height:8px;background:rgb(214,214,214)"></i><i style="position:absolute;left:62.93px;top:0px;width:8.37px;height:8px;background:rgb(195,195,195)"></i><i style="position:absolute;left:70.80px;top:0px;width:8.37px;height:8px;background:rgb(190,190,190)"></i><i style="position:absolute;left:78.67px;top:0px;width:8.37px;height:8px;background:rgb(212,212,212)"></i><i style="position:absolute;left:86.53px;top:0px;width:8.37px;height:8px;background:rgb(203,203,203)"></i><i style="position:absolute;left:94.40px;top:0px;width:8.37px;height:8px;background:rgb(193,193,193)"></i><i style="position:absolute;left:102.27px;top:0px;width:8.37px;height:8px;background:rgb(189,189,189)"></i><i style="position:absolute;left:110.13px;top:0px;width:8.37px;height:8px;background:rgb(186,186,186)"></i><i style="position:absolute;left:0.00px;top:8px;width:8.37px;height:7.5px;background:rgb(231,231,231)"></i><i style="position:absolute;left:7.87px;top:8px;width:8.37px;height:7.5px;background:rgb(234,234,234)"></i><i style="position:absolute;left:15.73px;top:8px;width:8.37px;height:7.5px;background:rgb(216,216,216)"></i><i style="position:absolute;left:23.60px;top:8px;width:8.37px;height:7.5px;background:rgb(206,206,206)"></i><i style="position:absolute;left:31.47px;top:8px;width:8.37px;height:7.5px;background:rgb(210,210,210)"></i><i style="position:absolute;left:39.33px;top:8px;width:8.37px;height:7.5px;background:rgb(209,209,209)"></i><i style="position:absolute;left:47.20px;top:8px;width:8.37px;height:7.5px;background:rgb(208,208,208)"></i><i style="position:absolute;left:55.07px;top:8px;width:8.37px;height:7.5px;background:rgb(218,218,218)"></i><i style="position:absolute;left:62.93px;top:8px;width:8.37px;height:7.5px;background:rgb(221,221,221)"></i><i style="position:absolute;left:70.80px;top:8px;width:8.37px;height:7.5px;background:rgb(207,207,207)"></i><i style="position:absolute;left:78.67px;top:8px;width:8.37px;height:7.5px;background:rgb(235,235,235)"></i><i style="position:absolute;left:86.53px;top:8px;width:8.37px;height:7.5px;background:rgb(226,226,226)"></i><i style="position:absolute;left:94.40px;top:8px;width:8.37px;height:7.5px;background:rgb(234,234,234)"></i><i style="position:absolute;left:102.27px;top:8px;width:8.37px;height:7.5px;background:rgb(218,218,218)"></i><i style="position:absolute;left:110.13px;top:8px;width:8.37px;height:7.5px;background:rgb(220,220,220)"></i></div>
<div class="hl" style="left:756px;top:325.5px;width:219px;background:#e8e8e8"></div>
<div class="t" style="left:761.10px;top:355.19px;font-size:15.6px;color:#333;">Email</div>
<div class="hl" style="left:756px;top:377.5px;width:219px;background:#e8e8e8"></div>
<div class="a" style="left:843.5px;top:386.6px;width:118px;height:12px;overflow:hidden;filter:blur(0.6px)"><i style="position:absolute;left:0.00px;top:0px;width:8.37px;height:7px;background:rgb(192,192,192)"></i><i style="position:absolute;left:7.87px;top:0px;width:8.37px;height:7px;background:rgb(179,179,179)"></i><i style="position:absolute;left:15.73px;top:0px;width:8.37px;height:7px;background:rgb(175,175,175)"></i><i style="position:absolute;left:23.60px;top:0px;width:8.37px;height:7px;background:rgb(193,193,193)"></i><i style="position:absolute;left:31.47px;top:0px;width:8.37px;height:7px;background:rgb(201,201,201)"></i><i style="position:absolute;left:39.33px;top:0px;width:8.37px;height:7px;background:rgb(198,198,198)"></i><i style="position:absolute;left:47.20px;top:0px;width:8.37px;height:7px;background:rgb(196,196,196)"></i><i style="position:absolute;left:55.07px;top:0px;width:8.37px;height:7px;background:rgb(182,182,182)"></i><i style="position:absolute;left:62.93px;top:0px;width:8.37px;height:7px;background:rgb(186,186,186)"></i><i style="position:absolute;left:70.80px;top:0px;width:8.37px;height:7px;background:rgb(191,191,191)"></i><i style="position:absolute;left:78.67px;top:0px;width:8.37px;height:7px;background:rgb(202,202,202)"></i><i style="position:absolute;left:86.53px;top:0px;width:8.37px;height:7px;background:rgb(174,174,174)"></i><i style="position:absolute;left:94.40px;top:0px;width:8.37px;height:7px;background:rgb(188,188,188)"></i><i style="position:absolute;left:102.27px;top:0px;width:8.37px;height:7px;background:rgb(203,203,203)"></i><i style="position:absolute;left:110.13px;top:0px;width:8.37px;height:7px;background:rgb(175,175,175)"></i><i style="position:absolute;left:0.00px;top:7px;width:8.37px;height:5px;background:rgb(212,212,212)"></i><i style="position:absolute;left:7.87px;top:7px;width:8.37px;height:5px;background:rgb(211,211,211)"></i><i style="position:absolute;left:15.73px;top:7px;width:8.37px;height:5px;background:rgb(237,237,237)"></i><i style="position:absolute;left:23.60px;top:7px;width:8.37px;height:5px;background:rgb(232,232,232)"></i><i style="position:absolute;left:31.47px;top:7px;width:8.37px;height:5px;background:rgb(207,207,207)"></i><i style="position:absolute;left:39.33px;top:7px;width:8.37px;height:5px;background:rgb(238,238,238)"></i><i style="position:absolute;left:47.20px;top:7px;width:8.37px;height:5px;background:rgb(233,233,233)"></i><i style="position:absolute;left:55.07px;top:7px;width:8.37px;height:5px;background:rgb(228,228,228)"></i><i style="position:absolute;left:62.93px;top:7px;width:8.37px;height:5px;background:rgb(209,209,209)"></i><i style="position:absolute;left:70.80px;top:7px;width:8.37px;height:5px;background:rgb(219,219,219)"></i><i style="position:absolute;left:78.67px;top:7px;width:8.37px;height:5px;background:rgb(208,208,208)"></i><i style="position:absolute;left:86.53px;top:7px;width:8.37px;height:5px;background:rgb(229,229,229)"></i><i style="position:absolute;left:94.40px;top:7px;width:8.37px;height:5px;background:rgb(217,217,217)"></i><i style="position:absolute;left:102.27px;top:7px;width:8.37px;height:5px;background:rgb(219,219,219)"></i><i style="position:absolute;left:110.13px;top:7px;width:8.37px;height:5px;background:rgb(229,229,229)"></i></div>
<div class="hl" style="left:756px;top:402.5px;width:219px;background:#e8e8e8"></div>
<div class="hl" style="left:1px;top:626.5px;width:998px;background:#dedede"></div>
<div class="a" style="left:15px;top:641.5px;width:114.5px;height:34px;border-radius:17px;border:1.6px solid #4d7896;background:#fff"></div>
<svg class="a" style="left:26px;top:650px" width="14" height="20" viewBox="0 0 14 20"><path d="M10.5 2.5 L3.8 10 L10.5 17.5" fill="none" stroke="#3b6f96" stroke-width="2.2"/></svg>
<div class="t" style="left:63.10px;top:652.56px;font-size:16px;color:#3a76a8;transform:scaleX(0.84);transform-origin:0 0">Back</div>
<div class="t" style="left:226.70px;top:659.50px;font-size:12.4px;color:#333;letter-spacing:0.15px">Total: 1321 item(s) 26.91 MB</div>
<div class="t" style="left:397.80px;top:659.50px;font-size:12.4px;color:#333;">selected: 1321 item(s) 26.91 MB</div>
<div class="a" style="left:674.5px;top:641.5px;width:172px;height:34px;border-radius:17px;background:#0b72c2;border:1px solid #0a66ad"></div>
<svg class="a" style="left:686px;top:644px" width="22" height="30" viewBox="686 644 22 30"><rect x="692.4" y="646.9" width="12.6" height="24.1" rx="2.6" fill="#f2faff"/><rect x="694.4" y="650.6" width="8.6" height="14.9" fill="#0b72c2"/><circle cx="698.7" cy="668.3" r="0.9" fill="#0b72c2"/><path d="M689.3 657.9 H695.5" stroke="#0b72c2" stroke-width="5"/><path d="M689.3 657.9 H695.5" stroke="#f2faff" stroke-width="2.8"/><path d="M694.3 653.5 L699.6 657.9 L694.3 662.3Z" fill="#f2faff"/></svg>
<div class="t" style="left:712.60px;top:652.12px;font-size:16.4px;color:#eaf6ff;transform:scaleX(0.862);transform-origin:0 0">Restore to Device</div>
<div class="a" style="left:851.5px;top:641.5px;width:121.5px;height:34px;border-radius:17px;background:#0b72c2;border:1px solid #0a66ad"></div>
<svg class="a" style="left:858px;top:646px" width="26" height="26" viewBox="858 646 26 26"><path d="M866.2 656.5 A7.6 7.6 0 1 1 869.2 665.6" fill="none" stroke="#f2faff" stroke-width="2"/><path d="M866.2 656.5 L865.3 661" stroke="#f2faff" stroke-width="2"/><path d="M862.9 654.8 L865.3 661.4 L871.2 658.3" fill="none" stroke="#f2faff" stroke-width="2.1" stroke-linejoin="miter"/></svg>
<div class="t" style="left:894.60px;top:652.12px;font-size:16.4px;color:#eaf6ff;transform:scaleX(0.97);transform-origin:0 0">Recover</div>
</body></html>
